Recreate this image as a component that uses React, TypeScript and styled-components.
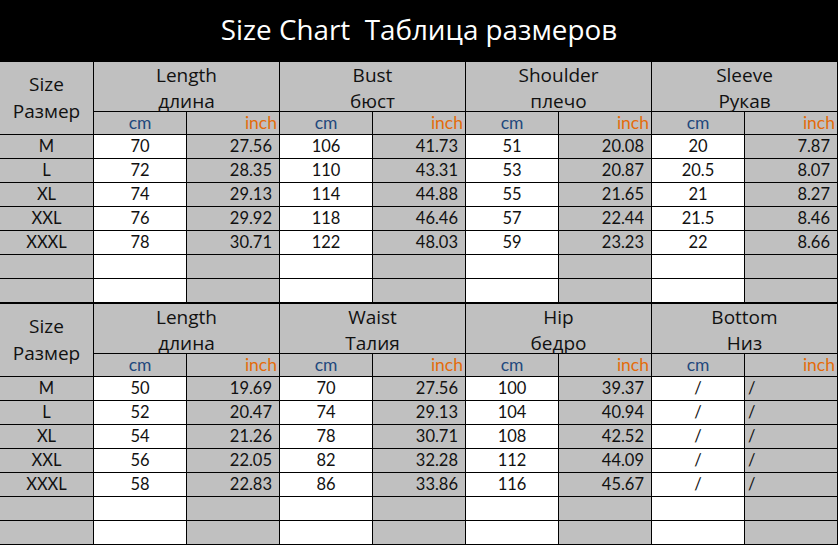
import React from "react";
import styled, { createGlobalStyle } from "styled-components";

const GlobalStyle = createGlobalStyle`
  html, body { margin: 0; padding: 0; background: #ffffff; }
  body { font-family: "Open Sans", sans-serif; }
`;

const GRAY = "#c0c0c0";

const Page = styled.div`
  width: 838px;
  display: flex;
  flex-direction: column;
`;

const TitleBar = styled.div`
  height: 62px;
  background: #000;
  color: #fff;
  display: flex;
  align-items: center;
  justify-content: center;
  font-family: "Open Sans", sans-serif;
  font-size: 27.8px;
  padding-bottom: 4px;
  box-sizing: border-box;
  white-space: pre;
`;

const Grid = styled.div<{ $topLine?: boolean }>`
  display: grid;
  grid-template-columns: 93px repeat(8, 92px);
  grid-template-rows: 49px 22px repeat(7, 23px);
  gap: 1px;
  background: #000;
  border-top: ${(p) => (p.$topLine ? "1px solid #000" : "none")};
  border-bottom: 1px solid #000;
  padding-right: 1px;
  width: 838px;
  box-sizing: border-box;
`;

const SizeHead = styled.div`
  grid-row: span 2;
  background: ${GRAY};
  display: flex;
  flex-direction: column;
  align-items: center;
  justify-content: center;
  font-family: "Open Sans", sans-serif;
  font-size: 19px;
  line-height: 27px;
  color: #111;
`;

const GroupHead = styled.div`
  grid-column: span 2;
  background: ${GRAY};
  display: flex;
  flex-direction: column;
  align-items: center;
  font-family: "Open Sans", sans-serif;
  font-size: 19px;
  line-height: 26px;
  color: #111;
  overflow: visible;
  position: relative;
  z-index: 0;
`;

const UnitCell = styled.div<{ $unit: "cm" | "inch" }>`
  background: ${GRAY};
  font-family: Lato, sans-serif;
  font-size: 17.5px;
  line-height: 22px;
  color: ${(p) => (p.$unit === "cm" ? "#1f497d" : "#e46c0a")};
  text-align: ${(p) => (p.$unit === "cm" ? "center" : "right")};
  padding-right: ${(p) => (p.$unit === "cm" ? "0" : "2px")};
  position: relative;
  z-index: 1;
`;

const DataCell = styled.div<{ $tone: "gray" | "white"; $align: "center" | "right" | "left" }>`
  background: ${(p) => (p.$tone === "gray" ? GRAY : "#ffffff")};
  font-family: Lato, sans-serif;
  font-size: 16.5px;
  line-height: 23px;
  color: #111;
  text-align: ${(p) => p.$align};
  padding: ${(p) => (p.$align === "right" ? "0 7px 0 0" : p.$align === "left" ? "0 0 0 3px" : "0")};
`;

type Group = [string, string];
type Row = string[];

const table1Groups: Group[] = [
  ["Length", "длина"],
  ["Bust", "бюст"],
  ["Shoulder", "плечо"],
  ["Sleeve", "Рукав"],
];

const table1Rows: Row[] = [
  ["M", "70", "27.56", "106", "41.73", "51", "20.08", "20", "7.87"],
  ["L", "72", "28.35", "110", "43.31", "53", "20.87", "20.5", "8.07"],
  ["XL", "74", "29.13", "114", "44.88", "55", "21.65", "21", "8.27"],
  ["XXL", "76", "29.92", "118", "46.46", "57", "22.44", "21.5", "8.46"],
  ["XXXL", "78", "30.71", "122", "48.03", "59", "23.23", "22", "8.66"],
  ["", "", "", "", "", "", "", "", ""],
  ["", "", "", "", "", "", "", "", ""],
];

const table2Groups: Group[] = [
  ["Length", "длина"],
  ["Waist", "Талия"],
  ["Hip", "бедро"],
  ["Bottom", "Низ"],
];

const table2Rows: Row[] = [
  ["M", "50", "19.69", "70", "27.56", "100", "39.37", "/", "/"],
  ["L", "52", "20.47", "74", "29.13", "104", "40.94", "/", "/"],
  ["XL", "54", "21.26", "78", "30.71", "108", "42.52", "/", "/"],
  ["XXL", "56", "22.05", "82", "32.28", "112", "44.09", "/", "/"],
  ["XXXL", "58", "22.83", "86", "33.86", "116", "45.67", "/", "/"],
  ["", "", "", "", "", "", "", "", ""],
  ["", "", "", "", "", "", "", "", ""],
];

function SizeTable({ groups, rows, topLine }: { groups: Group[]; rows: Row[]; topLine?: boolean }) {
  return (
    <Grid $topLine={topLine}>
      <SizeHead>
        <span>Size</span>
        <span>Размер</span>
      </SizeHead>
      {groups.map(([en, ru]) => (
        <GroupHead key={en}>
          <span>{en}</span>
          <span>{ru}</span>
        </GroupHead>
      ))}
      {groups.map(([en]) => (
        <React.Fragment key={en + "-u"}>
          <UnitCell $unit="cm">cm</UnitCell>
          <UnitCell $unit="inch">inch</UnitCell>
        </React.Fragment>
      ))}
      {rows.map((row, ri) =>
        row.map((v, ci) => {
          const isSize = ci === 0;
          const isInch = ci > 0 && ci % 2 === 0;
          const tone = isSize || isInch ? "gray" : "white";
          const align = isInch ? (v === "/" ? "left" : "right") : "center";
          return (
            <DataCell key={`${ri}-${ci}`} $tone={tone} $align={align}>
              {v}
            </DataCell>
          );
        })
      )}
    </Grid>
  );
}

export default function App() {
  return (
    <>
      <GlobalStyle />
      <Page>
        <TitleBar>{"Size Chart  Таблица размеров"}</TitleBar>
        <SizeTable groups={table1Groups} rows={table1Rows} />
        <SizeTable groups={table2Groups} rows={table2Rows} topLine />
      </Page>
    </>
  );
}
